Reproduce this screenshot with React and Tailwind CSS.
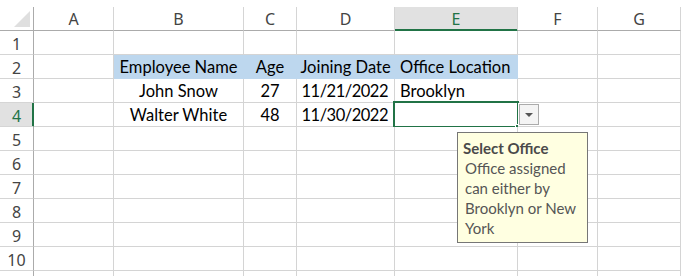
const COLS = ['A', 'B', 'C', 'D', 'E', 'F', 'G']

const ROWS = {
  2: [null, { t: 'Employee Name', a: 'center' }, { t: 'Age', a: 'center' }, { t: 'Joining Date', a: 'center' }, { t: 'Office Location', a: 'left' }],
  3: [null, { t: 'John Snow', a: 'center' }, { t: '27', a: 'center' }, { t: '11/21/2022', a: 'right' }, { t: 'Brooklyn', a: 'left' }],
  4: [null, { t: 'Walter White', a: 'center' }, { t: '48', a: 'center' }, { t: '11/30/2022', a: 'right' }, null],
}

const ALIGN = {
  center: 'justify-center',
  left: 'justify-start pl-[5px]',
  right: 'justify-end pr-[6px] tracking-[-0.5px]',
}

function HeaderCell({ label, selected }) {
  return (
    <div
      className={
        'h-6 flex items-center justify-center border-r border-b text-[16px] ' +
        (selected
          ? 'bg-[#e1e1e1] text-[#217346] border-r-[#d5d5d5] border-b-[#217346] shadow-[inset_0_-1px_0_#217346]'
          : 'bg-white text-[#444] border-r-[#d5d5d5] border-b-[#ababab]')
      }
      style={{ fontFamily: '"Noto Sans", sans-serif' }}
    >
      {label}
    </div>
  )
}

function RowHead({ n }) {
  const sel = n === 4
  return (
    <div
      className={
        'h-6 flex items-center justify-center pt-[2px] border-r border-b text-[16px] ' +
        (sel
          ? 'bg-[#e1e1e1] text-[#217346] border-r-[#217346] border-b-[#d5d5d5] shadow-[inset_-1px_0_0_#217346]'
          : 'bg-white text-[#444] border-r-[#ababab] border-b-[#d5d5d5]')
      }
      style={{ fontFamily: '"Noto Sans", sans-serif' }}
    >
      {n <= 10 ? n : null}
    </div>
  )
}

function Cell({ row, col }) {
  const data = ROWS[row]?.[col]
  const filled = row === 2 && col >= 1 && col <= 4
  const active = row === 4 && col === 4
  return (
    <div
      className={
        'relative h-6 flex items-end pb-[3px] leading-none border-b border-r text-[16.5px] text-black whitespace-nowrap ' +
        (filled ? 'bg-[#bdd7ee] border-[#bdd7ee] ' : 'bg-white border-[#d4d4d4] ') +
        (data ? ALIGN[data.a] : '')
      }
      style={{ fontFamily: 'Lato, sans-serif' }}
    >
      {data ? data.t : null}
      {active ? (
        <>
          <div className="absolute -left-[2px] -top-[2px] w-[126px] h-[27px] border-2 border-[#217346] pointer-events-none" />
          <div className="absolute left-[120px] top-[21px] w-[6px] h-[6px] bg-[#217346] border border-white" />
          <div className="absolute left-[124px] top-[1px] w-[20px] h-[21px] z-10 bg-[#f4f4f4] border border-[#ababab] flex items-center justify-center">
            <svg width="8" height="4" viewBox="0 0 8 4">
              <path d="M0 0 H8 L4 4 Z" fill="#555" />
            </svg>
          </div>
          <div className="absolute left-[62px] top-[29px] z-20 w-[131px] h-[111px] bg-[#ffffe1] border border-[#767676] pl-[5px] pt-[5px] text-[15px] leading-[20px] text-[#555] whitespace-normal">
            <div className="font-bold text-[#4a4a4a]">Select Office</div>
            <div className="pl-[2px]">Office assigned can either by Brooklyn or New York</div>
          </div>
        </>
      ) : null}
    </div>
  )
}

export default function App() {
  const rows = Array.from({ length: 11 }, (_, i) => i + 1)
  return (
    <div className="w-[681px] h-[276px] overflow-hidden bg-white pt-[7px]">
      <div className="grid grid-cols-[34px_80px_130px_53px_98px_123px_80px_1fr]">
        <div className="h-6 border-r border-b border-r-[#ababab] border-b-[#ababab] bg-white flex items-end justify-end pr-[3px] pb-[3px]">
          <svg width="16" height="16" viewBox="0 0 16 16">
            <path d="M16 0 V16 H0 Z" fill="#dfdfdf" />
          </svg>
        </div>
        {COLS.map((c) => (
          <HeaderCell key={c} label={c} selected={c === 'E'} />
        ))}
        {rows.map((r) => (
          <div key={r} className="contents">
            <RowHead n={r} />
            {COLS.map((c, ci) => (
              <Cell key={c} row={r} col={ci} />
            ))}
          </div>
        ))}
      </div>
    </div>
  )
}
